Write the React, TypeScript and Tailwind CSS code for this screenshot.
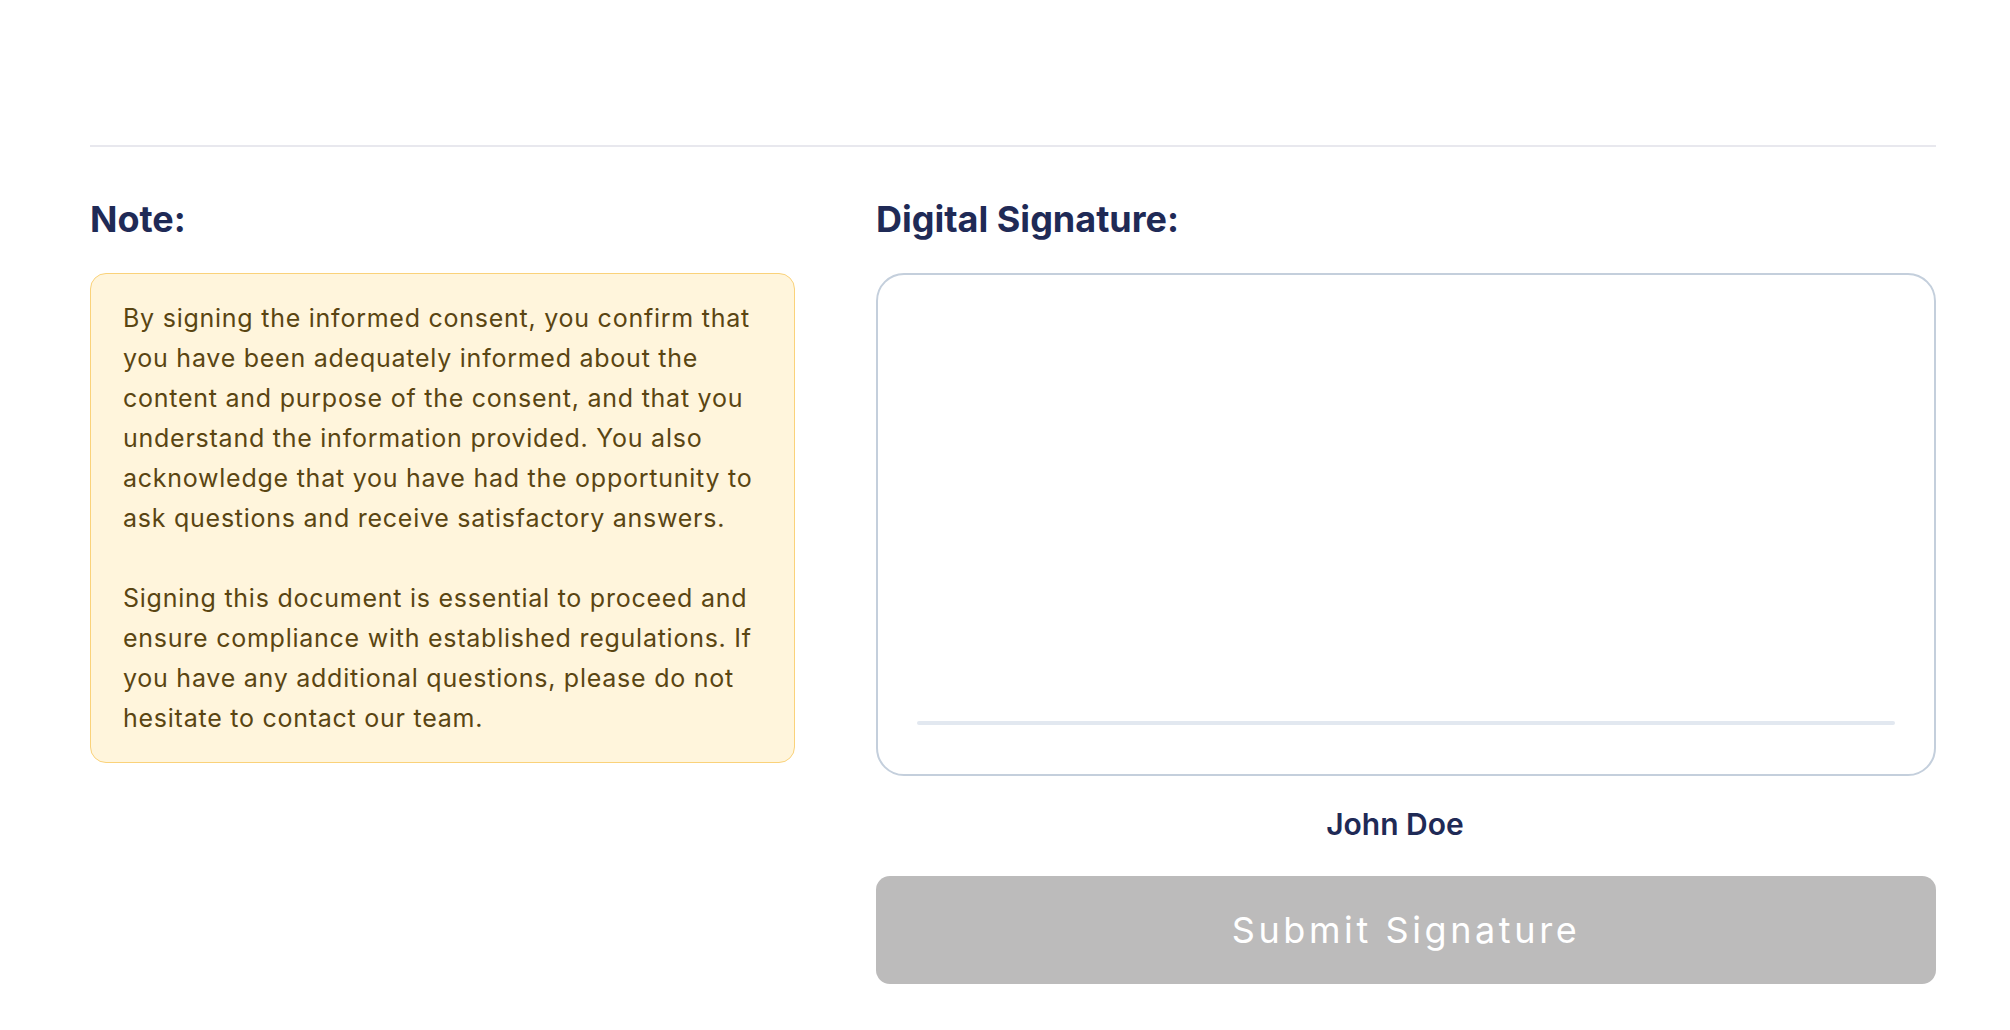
import React from 'react';

const noteParagraphs = [
  'By signing the informed consent, you confirm that you have been adequately informed about the content and purpose of the consent, and that you understand the information provided. You also acknowledge that you have had the opportunity to ask questions and receive satisfactory answers.',
  'Signing this document is essential to proceed and ensure compliance with established regulations. If you have any additional questions, please do not hesitate to contact our team.',
];

function NoteCard() {
  return (
    <div className="flex flex-col">
      <h2 className="text-[36px] leading-10 font-bold text-[#1f2a56]">Note:</h2>
      <div className="mt-[34px] rounded-2xl border border-[#fad27a] bg-[#fff5dc] px-8 py-6 text-[25px] leading-10 tracking-[0.03em] text-[#5a4512]">
        {noteParagraphs.map((p, i) => (
          <p key={i} className={i > 0 ? 'mt-10' : ''}>
            {p}
          </p>
        ))}
      </div>
    </div>
  );
}

function SignaturePad() {
  return (
    <div className="flex flex-col">
      <h2 className="text-[36px] leading-10 font-bold text-[#1f2a56]">Digital Signature:</h2>
      <div className="mt-[34px] flex h-[503px] flex-col justify-end rounded-[28px] border-2 border-[#c4cfdc] bg-white px-[39px] pb-[49px]">
        <div className="h-[4px] w-full rounded-full bg-[#e2e8f0]" />
      </div>
      <p className="mt-[30px] pr-[22px] text-center text-[30px] leading-9 font-semibold text-[#1f2a56]">John Doe</p>
      <button
        disabled
        className="mt-[34px] flex h-[108px] w-full items-center justify-center rounded-[14px] bg-[#bcbbbb] text-[36px] leading-10 tracking-widest text-white"
      >
        Submit Signature
      </button>
    </div>
  );
}

export default function App() {
  return (
    <div className="min-h-screen bg-white" style={{ fontFamily: 'Inter, "Noto Sans", sans-serif' }}>
      <div className="ml-[90px] w-[1846px] pt-[145px]">
        <div className="h-[2px] w-full bg-[#e8e8ee]" />
        <div className="mt-[52px] grid grid-cols-[705px_1060px] gap-[81px]">
          <NoteCard />
          <SignaturePad />
        </div>
      </div>
    </div>
  );
}
